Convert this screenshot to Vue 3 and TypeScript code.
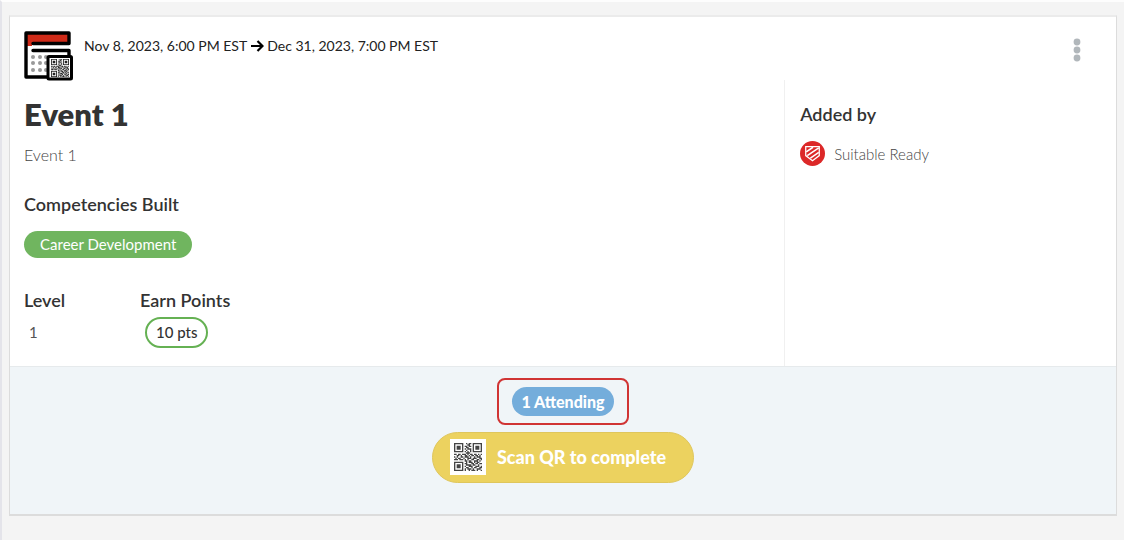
<script setup lang="ts">
const qrRows: string[] = [
  '111111100101101111111',
  '100000100011001000001',
  '101110101101101011101',
  '101110100110001011101',
  '101110101011101011101',
  '100000100100101000001',
  '111111101010101111111',
  '000000000111000000000',
  '110110111010110110101',
  '001101001101011011010',
  '101001101110100101110',
  '010110010011101110011',
  '111011101010011001101',
  '000000001101100111010',
  '111111100101110101100',
  '100000101100011011011',
  '101110100111101100100',
  '101110101001110011101',
  '101110100110010110011',
  '100000101011101001110',
  '111111101001011101001',
]

const qrPath: string = qrRows
  .map((row, y) =>
    [...row].map((cell, x) => (cell === '1' ? `M${x} ${y}h1v1h-1z` : '')).join(''),
  )
  .join('')

const dots: { x: number; y: number }[] = [26, 32, 39].flatMap((y) =>
  [9, 16, 22].map((x) => ({ x, y })),
)

const event = {
  title: 'Event 1',
  description: 'Event 1',
  start: 'Nov 8, 2023, 6:00 PM EST',
  end: 'Dec 31, 2023, 7:00 PM EST',
  competency: 'Career Development',
  level: 1,
  points: 10,
  attending: 1,
  owner: 'Suitable Ready',
}
</script>

<template>
  <main class="page">
    <article class="card">
      <header class="head">
        <svg class="calendar" viewBox="0 0 49 50" aria-hidden="true">
          <rect x="2" y="2" width="43" height="44" fill="#fff" />
          <path d="M2 2h43v10H8v3H2z" fill="#cf2a18" />
          <circle v-for="d in dots" :key="`${d.x}-${d.y}`" :cx="d.x" :cy="d.y" r="2" fill="#999" />
          <path
            d="M9 12.500H45V2H2V46H24M9 19.500H45V26"
            fill="none"
            stroke="#000"
            stroke-width="3.400"
            stroke-linecap="round"
            stroke-linejoin="round"
          />
          <rect x="24" y="25.500" width="23.500" height="22.500" rx="1" fill="#fff" stroke="#000" stroke-width="3" />
          <svg x="27" y="28" width="18" height="18" viewBox="0 0 21 21">
            <path :d="qrPath" fill="#222" />
          </svg>
        </svg>
        <p class="dates">
          <time>{{ event.start }}</time>
          <svg class="arrow" viewBox="0 0 14 12" role="img" aria-label="to">
            <path d="M1 6h11M7.500 1 12.500 6l-5 5" fill="none" stroke="#000" stroke-width="2.200" />
          </svg>
          <time>{{ event.end }}</time>
        </p>
        <button class="more" type="button" aria-label="More options">
          <svg viewBox="0 0 8 24" aria-hidden="true">
            <circle cx="4" cy="4" r="3.400" />
            <circle cx="4" cy="12" r="3.400" />
            <circle cx="4" cy="20" r="3.400" />
          </svg>
        </button>
      </header>

      <div class="body">
        <section class="details">
          <h1>{{ event.title }}</h1>
          <p class="description">{{ event.description }}</p>
          <h2>Competencies Built</h2>
          <span class="tag">{{ event.competency }}</span>
          <div class="stats">
            <div class="stat">
              <h2>Level</h2>
              <span class="level">{{ event.level }}</span>
            </div>
            <div class="stat">
              <h2>Earn Points</h2>
              <span class="points">{{ event.points }} pts</span>
            </div>
          </div>
        </section>
        <aside class="owner">
          <h2>Added by</h2>
          <div class="person">
            <svg class="avatar" viewBox="0 0 24 24" aria-hidden="true">
              <circle cx="12" cy="12" r="12" fill="#dc2828" />
              <path d="M5.500 5.500h13v8.500L12 19l-6.500-5z" fill="none" stroke="#fff" stroke-width="1.200" />
              <path
                d="M6 10.500 12.500 6M7 14 18 6.500M10 16.500 18 11"
                fill="none"
                stroke="#fff"
                stroke-width="1.500"
              />
            </svg>
            <span>{{ event.owner }}</span>
          </div>
        </aside>
      </div>

      <footer class="foot">
        <div class="highlight">
          <button class="attending" type="button">{{ event.attending }} Attending</button>
        </div>
        <button class="scan" type="button">
          <svg class="qr" viewBox="0 0 36 36" aria-hidden="true">
            <rect width="36" height="36" fill="#fff" />
            <svg x="4" y="4" width="28" height="28" viewBox="0 0 21 21">
              <path :d="qrPath" fill="#444" />
            </svg>
          </svg>
          <span>Scan QR to complete</span>
        </button>
      </footer>
    </article>
  </main>
</template>

<style>
body {
  margin: 0;
  background: #f4f4f4;
}
</style>

<style scoped>
.page {
  box-sizing: border-box;
  min-height: 100vh;
  padding: 13px 7px 22px;
  border-top: 2px solid #fdfdfd;
  border-left: 2px solid #e4e4ea;
  font-family: Lato, "Liberation Sans", sans-serif;
  font-size: 15px;
  line-height: 24px;
  color: #333;
}

h1,
h2,
p {
  margin: 0;
}

button {
  padding: 0;
  border: 0;
  font: inherit;
  cursor: pointer;
}

.card {
  background: #fff;
  border: 1px solid #dcdcdc;
  border-top: 2px solid #ebebeb;
  border-bottom: 2px solid #dcdcdc;
}

.head {
  display: flex;
  align-items: flex-start;
  height: 63px;
  padding: 0 35px 0 14px;
}

.calendar {
  flex: none;
  width: 49px;
  height: 50px;
  margin-top: 14px;
}

.dates {
  display: flex;
  align-items: center;
  gap: 3px;
  margin: 17px auto 0 11px;
  font-size: 14px;
  color: #222;
}

.arrow {
  width: 14px;
  height: 12px;
}

.more {
  width: 8px;
  height: 24px;
  margin-top: 21px;
  background: none;
}

.more svg {
  display: block;
  fill: #b1b7bb;
}

.body {
  display: grid;
  grid-template-columns: 7fr 3fr;
}

.details {
  padding: 14px 14px 18px;
}

h1 {
  font-size: 31px;
  line-height: 40px;
  font-weight: 800;
}

h2 {
  font-size: 18px;
  line-height: 24px;
  font-weight: 600;
}

.description {
  margin: 9px 0 25px;
  font-size: 16px;
  font-weight: 300;
  color: #444;
}

.tag {
  display: inline-block;
  margin-top: 15px;
  padding: 0 16px;
  border-radius: 14px;
  line-height: 27px;
  background: #70b55f;
  color: #fff;
}

.stats {
  display: flex;
  gap: 24px;
  margin-top: 30px;
}

.stat {
  min-width: 92px;
}

.level {
  display: block;
  margin: 8px 5px 0;
  color: #555;
}

.points {
  display: inline-block;
  margin: 5px 5px 0;
  padding: 0 9px;
  border: 2px solid #65b153;
  border-radius: 16px;
  line-height: 27px;
  font-weight: 500;
}

.owner {
  padding: 22px 15px;
  border-left: 1px solid #f0f0f0;
}

.person {
  display: flex;
  align-items: center;
  gap: 9px;
  margin-top: 15px;
  font-weight: 300;
  color: #444;
}

.avatar {
  width: 25px;
  height: 25px;
}

.foot {
  display: flex;
  flex-direction: column;
  align-items: center;
  gap: 7px;
  padding: 11px 15px 31px;
  border-top: 1px solid #e6eaec;
  background: #f0f5f8;
}

.highlight {
  padding: 7px 13px;
  border: 2px solid #d03434;
  border-radius: 8px;
}

.attending {
  display: block;
  padding: 0 9px;
  border-radius: 15px;
  line-height: 29px;
  font-size: 16px;
  font-weight: 900;
  background: #74addb;
  color: #fff;
}

.scan {
  display: flex;
  align-items: center;
  gap: 11px;
  padding: 6px 27px 7px 17px;
  border: 1px solid #dfc65c;
  border-radius: 26px;
  background: #ecd25f;
  color: #fff;
  font-size: 18px;
  font-weight: 900;
}

.qr {
  width: 36px;
  height: 36px;
}
</style>
